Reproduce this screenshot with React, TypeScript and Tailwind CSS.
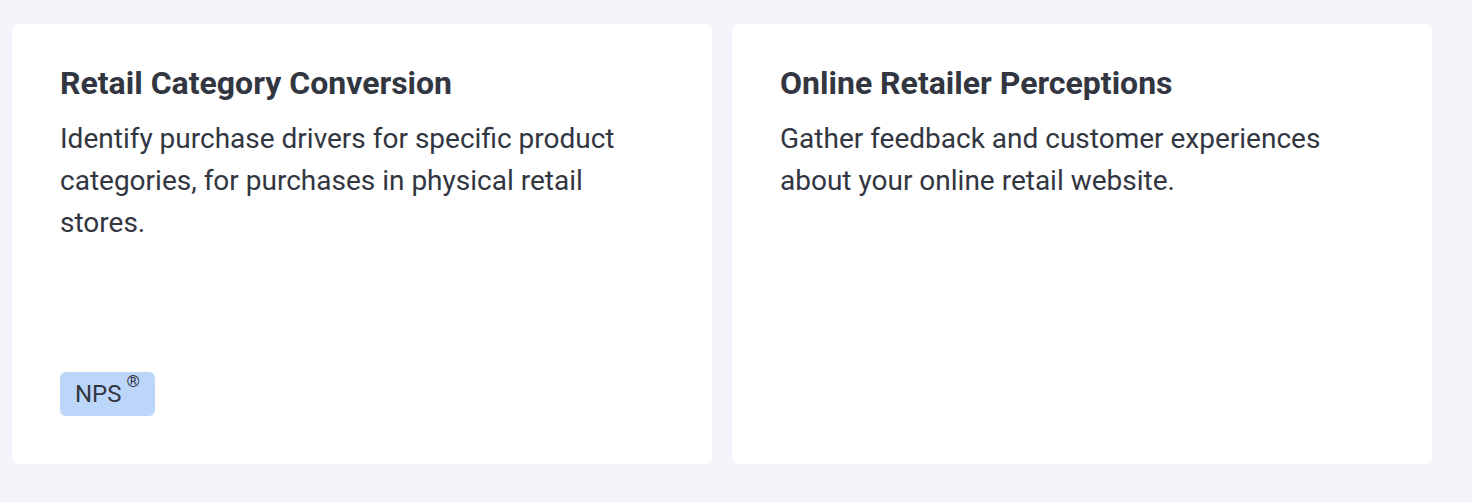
import React from "react";

function Card({ title, desc, badge }: { title: string; desc: string; badge?: boolean }) {
  return (
    <div className="w-[700px] h-[440px] bg-white rounded-[6px] px-12 pt-[39px] pb-[48px] flex flex-col">
      <h2 className="text-[32px] leading-[40px] font-bold text-[#323641]">{title}</h2>
      <p className="mt-[15px] text-[28px] leading-[42px] text-[#323641]">{desc}</p>
      {badge && (
        <div className="mt-auto">
          <span className="inline-flex items-start h-[44px] px-[15px] pt-[7px] rounded-[6px] bg-[#bcd6fa] text-[24px] leading-[30px] text-[#323641]">
            NPS<span className="text-[17px] ml-[5px] relative top-[-6px] leading-none">®</span>
          </span>
        </div>
      )}
    </div>
  );
}

export default function App() {
  return (
    <div className="w-[1472px] h-[502px] bg-[#f4f5fa] pl-3 pt-6 flex gap-5 items-start" style={{ fontFamily: "Roboto, sans-serif" }}>
      <Card
        title="Retail Category Conversion"
        desc="Identify purchase drivers for specific product categories, for purchases in physical retail stores."
        badge
      />
      <Card
        title="Online Retailer Perceptions"
        desc="Gather feedback and customer experiences about your online retail website."
      />
    </div>
  );
}
